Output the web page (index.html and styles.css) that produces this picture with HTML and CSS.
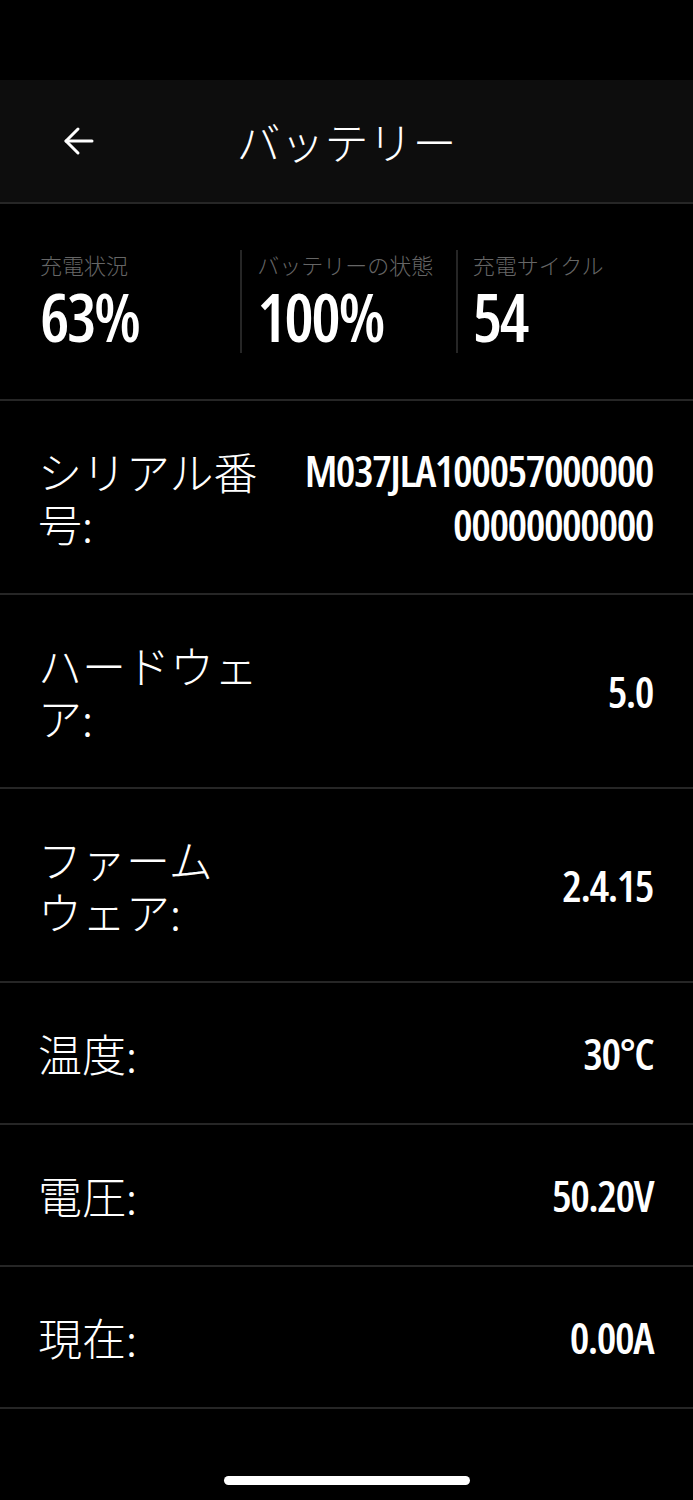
FILE: index.html
```html
<!DOCTYPE html>
<html lang="ja">
<head>
    <meta charset="UTF-8">
    <link rel="stylesheet" href="styles.css">
</head>
<body>
    <div class="status-bar"></div>

    <header class="top-bar">
        <button class="back-button" aria-label="戻る">
            <svg width="32" height="30" viewBox="0 0 32 30" fill="none" stroke="#fff" stroke-width="3" stroke-linecap="round" stroke-linejoin="round">
                <path d="M3 15h26"/>
                <path d="M15 3L3 15l12 12"/>
            </svg>
        </button>
        <h1 class="title">バッテリー</h1>
        <span></span>
    </header>

    <section class="stats">
        <div class="stat">
            <div class="stat-label">充電状況</div>
            <div class="stat-value">63%</div>
        </div>
        <div class="stat">
            <div class="stat-label">バッテリーの状態</div>
            <div class="stat-value">100%</div>
        </div>
        <div class="stat">
            <div class="stat-label">充電サイクル</div>
            <div class="stat-value">54</div>
        </div>
    </section>

    <ul class="info-list">
        <li class="info-row">
            <span class="info-label">シリアル番号:</span>
            <span class="info-value serial">M037JLA10005700000000000000000</span>
        </li>
        <li class="info-row">
            <span class="info-label">ハードウェア:</span>
            <span class="info-value">5.0</span>
        </li>
        <li class="info-row">
            <span class="info-label">ファームウェア:</span>
            <span class="info-value">2.4.15</span>
        </li>
        <li class="info-row">
            <span class="info-label">温度:</span>
            <span class="info-value">30°C</span>
        </li>
        <li class="info-row">
            <span class="info-label">電圧:</span>
            <span class="info-value">50.20V</span>
        </li>
        <li class="info-row">
            <span class="info-label">現在:</span>
            <span class="info-value">0.00A</span>
        </li>
    </ul>

    <div class="home-area">
        <div class="home-indicator"></div>
    </div>
</body>
</html>
```
FILE: styles.css
```css
:root {
    --bg-color: #000;
    --bar-bg: #0d0d0d;
    --line-color: #262626;
    --text-color: #fff;
    --muted-color: #666;
    --jp-font: "Noto Sans CJK JP", "Noto Sans", sans-serif;
    --num-font: "Open Sans", "Liberation Sans", sans-serif;
}

body {
    margin: 0;
    background: var(--bg-color);
    color: var(--text-color);
    font-family: var(--jp-font);
    line-break: strict;
}

.status-bar {
    height: 80px;
}

.top-bar {
    display: grid;
    grid-template-columns: 1fr auto 1fr;
    align-items: center;
    height: 122px;
    background: var(--bar-bg);
    border-bottom: 2px solid var(--line-color);
}

.back-button {
    justify-self: start;
    display: flex;
    margin-left: 63px;
    padding: 0;
    background: none;
    border: none;
}

.title {
    margin: 0;
    font-size: 44px;
    font-weight: 300;
    line-height: 1;
}

/* three headline numbers */
.stats {
    display: grid;
    grid-template-columns: repeat(3, 1fr);
    padding: 46px 22px 46px 25px;
    border-bottom: 2px solid var(--line-color);
}

.stat {
    padding: 0 0 4px 15px;
}

.stat + .stat {
    border-left: 2px solid var(--line-color);
}

.stat-label {
    color: var(--muted-color);
    font-size: 22px;
    font-weight: 300;
    line-height: 28px;
    white-space: nowrap;
}

.stat-value {
    margin-top: 5px;
    font-family: var(--num-font);
    font-stretch: 75%;
    font-weight: 600;
    font-size: 66px;
    line-height: 66px;
    letter-spacing: -2.5px;
}

.info-list {
    margin: 0;
    padding: 0;
    list-style: none;
}

.info-row {
    display: flex;
    justify-content: space-between;
    align-items: center;
    gap: 30px;
    padding: 44px 40px 44px 38px;
    border-bottom: 2px solid var(--line-color);
}

.info-label {
    flex: 0 0 236px;
    font-size: 44px;
    font-weight: 300;
    line-height: 52px;
}

.info-value {
    font-family: var(--num-font);
    font-stretch: 75%;
    font-weight: 600;
    font-size: 44px;
    line-height: 52px;
    letter-spacing: -1.5px;
    text-align: right;
}

.serial {
    max-width: 356px;
    margin: -2px 0;
    line-height: 54px;
    overflow-wrap: anywhere;
}

.home-area {
    display: flex;
    justify-content: center;
    padding-top: 67px;
}

.home-indicator {
    width: 246px;
    height: 9px;
    border-radius: 5px;
    background: #fff;
}
```
